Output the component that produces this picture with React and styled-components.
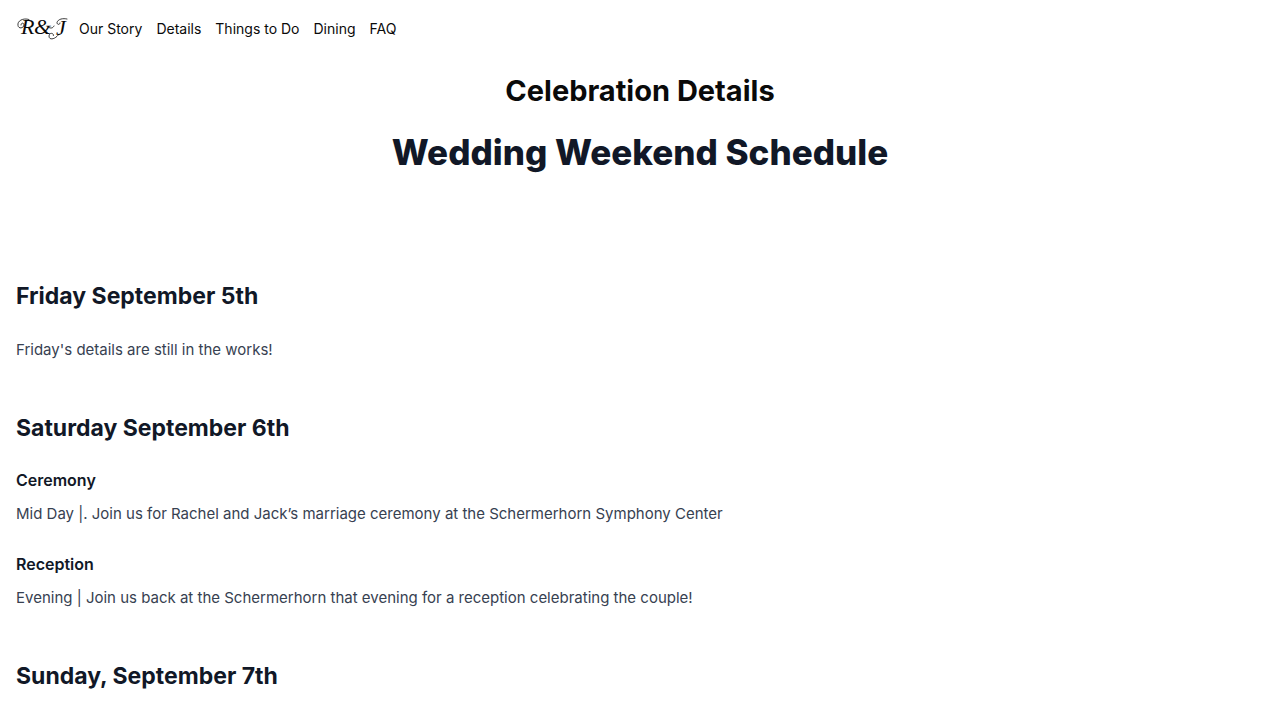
import React from "react";
import styled, { createGlobalStyle } from "styled-components";

const GlobalStyle = createGlobalStyle`
  *, *::before, *::after { box-sizing: border-box; }
  body {
    margin: 0;
    background: #ffffff;
    color: #0a0a0a;
    font-family: Inter, "Liberation Sans", sans-serif;
    font-size: 15px;
    line-height: 28px;
  }
  h1, h2, h3, h4, p { margin: 0; }
`;

const Nav = styled.nav`
  display: flex;
  align-items: center;
  gap: 14px;
  height: 58px;
  padding: 0 16px;
`;

const HomeLink = styled.a`
  display: flex;
  margin-right: -4px;
  color: #0a0a0a;
`;

const NavLink = styled.a`
  color: #0a0a0a;
  font-size: 14px;
  line-height: 20px;
  text-decoration: none;
  white-space: nowrap;
`;

const Header = styled.header`
  padding-top: 15px;
  text-align: center;
`;

const PageTitle = styled.h1`
  font-size: 29px;
  line-height: 36px;
  font-weight: 700;
`;

const ScheduleTitle = styled.h2`
  margin-top: 23px;
  color: #111827;
  font-size: 35px;
  line-height: 40px;
  font-weight: 800;
`;

const Schedule = styled.main`
  display: flex;
  flex-direction: column;
  gap: 48px;
  padding: 108px 16px 64px;
`;

const Day = styled.section`
  display: flex;
  flex-direction: column;
  gap: 24px;
`;

const DayTitle = styled.h3`
  color: #111827;
  font-size: 23px;
  line-height: 32px;
  font-weight: 700;
`;

const Event = styled.article`
  display: flex;
  flex-direction: column;
  gap: 8px;
`;

const EventTitle = styled.h4`
  color: #111827;
  font-size: 16px;
  line-height: 24px;
  font-weight: 600;
`;

const Text = styled.p`
  color: #374151;
`;

const Initials = styled.text`
  font-family: "Liberation Serif", serif;
  font-style: italic;
  font-size: 22px;
`;

const Monogram = () => (
  <svg width="53" height="34" viewBox="0 -4 53 34" role="img" aria-label="R&J">
    <Initials x="5" y="18" fill="currentColor">R</Initials>
    <Initials x="18" y="18" fill="currentColor">&amp;</Initials>
    <Initials x="40" y="19" fill="currentColor">J</Initials>
    <g fill="none" stroke="currentColor" strokeWidth="0.8" strokeLinecap="round">
      <path d="M13 3.5C7 1.5 1 5 2 9.500C2.500 13 7.500 12.500 8 9C8 6.500 5 6.500 5 9" />
      <path d="M32 11C35 13 37 12 38 10" />
      <path d="M51 3C47 2 42 3 41 6.500C41 9 44 9 44 7" />
      <path d="M43 18C40 23 33 25 33 20C33 16.500 38 16.500 37.500 19.500" />
    </g>
  </svg>
);

const links = ["Our Story", "Details", "Things to Do", "Dining", "FAQ"];

const days = [
  { title: "Friday September 5th", note: "Friday's details are still in the works!", events: [] },
  {
    title: "Saturday September 6th",
    events: [
      {
        title: "Ceremony",
        text: "Mid Day |. Join us for Rachel and Jack’s marriage ceremony at the Schermerhorn Symphony Center",
      },
      {
        title: "Reception",
        text: "Evening | Join us back at the Schermerhorn that evening for a reception celebrating the couple!",
      },
    ],
  },
  { title: "Sunday, September 7th", events: [] },
];

export default function App() {
  return (
    <>
      <GlobalStyle />
      <Nav>
        <HomeLink href="#home">
          <Monogram />
        </HomeLink>
        {links.map((label) => (
          <NavLink key={label} href="#">{label}</NavLink>
        ))}
      </Nav>
      <Header>
        <PageTitle>Celebration Details</PageTitle>
        <ScheduleTitle>Wedding Weekend Schedule</ScheduleTitle>
      </Header>
      <Schedule>
        {days.map((day) => (
          <Day key={day.title}>
            <DayTitle>{day.title}</DayTitle>
            {day.note && <Text>{day.note}</Text>}
            {day.events.map((event) => (
              <Event key={event.title}>
                <EventTitle>{event.title}</EventTitle>
                <Text>{event.text}</Text>
              </Event>
            ))}
          </Day>
        ))}
      </Schedule>
    </>
  );
}
